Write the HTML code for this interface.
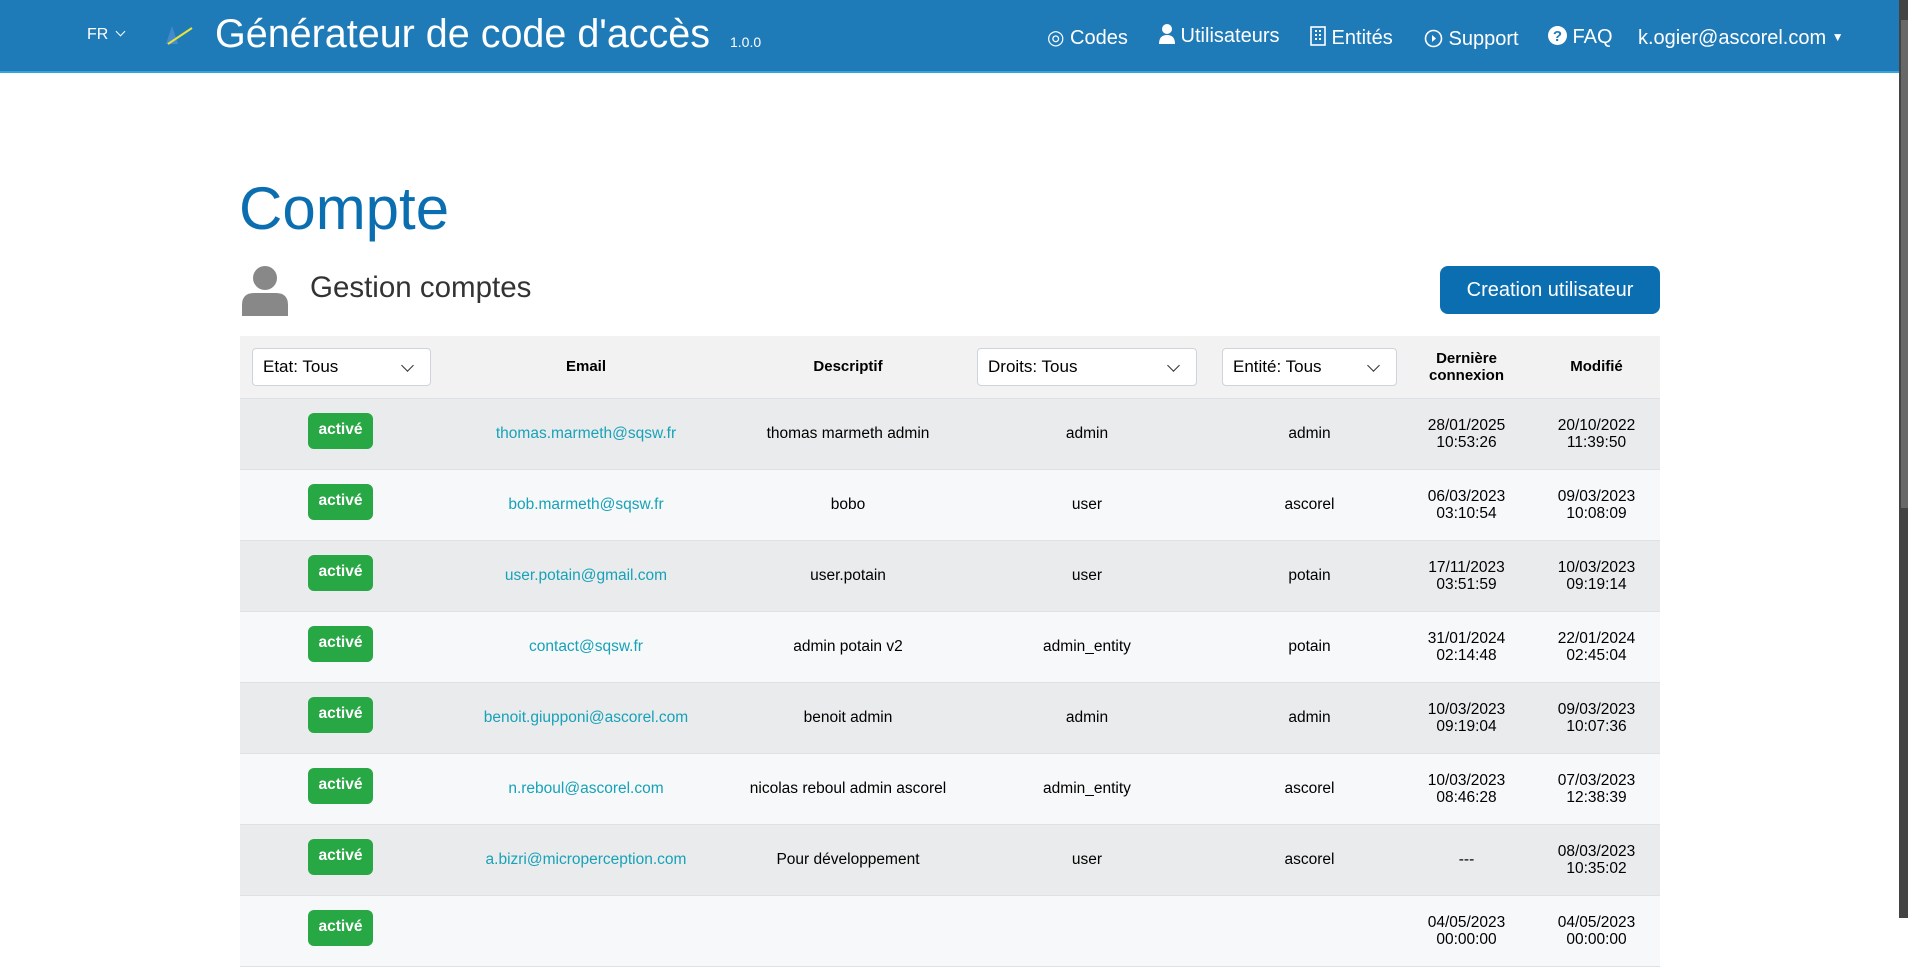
<!DOCTYPE html>
<html><head><meta charset="utf-8"><style>
*{box-sizing:border-box;margin:0;padding:0}
body{width:1908px;height:918px;overflow:hidden;background:#fff;font-family:"Liberation Sans",Arial,sans-serif;position:relative}
.hdr{position:absolute;left:0;top:0;width:1899px;height:73px;background:#1f7bb8;border-bottom:2px solid #35a3dc;color:#fff}
.hdr .t{position:absolute;white-space:nowrap}
.nav{font-size:20px;top:25px}
.scroll{position:absolute;left:1899px;top:0;width:9px;height:918px;background:#434343}
.scroll div{position:absolute;left:2px;top:20px;width:7px;height:488px;background:#686868}
h1{position:absolute;left:239px;top:174px;font-size:60px;font-weight:normal;color:#0a6eb0}
.sub{position:absolute;left:310px;top:271px;font-size:29.5px;color:#333}
.btn{position:absolute;left:1440px;top:266px;width:220px;height:48px;background:#0a6eb0;border-radius:8px;color:#fff;font-size:20px;text-align:center;line-height:48px}
table{position:absolute;left:240px;top:336px;width:1420px;border-collapse:collapse;font-size:16px}
th{height:62px;background:#f2f2f2;font-weight:bold;font-size:15px;text-align:center;border-bottom:1px solid #dee2e6;line-height:17px}
td{height:71px;text-align:center;border-bottom:1px solid #dee2e6;line-height:17px;font-size:15.5px}
tr.o td{background:#eaebec}tr.e td{background:#f7f8f9}
.sel{display:block;margin:0 auto;height:38px;border:1px solid #ced4da;border-radius:4px;background:#fff;text-align:left;font-weight:normal;font-size:17px;padding:0 10px;line-height:36px;position:relative}
.sel:after{content:"";position:absolute;right:18px;top:12px;width:8px;height:8px;border-right:1.6px solid #333;border-bottom:1.6px solid #333;transform:rotate(45deg)}
.b{display:inline-block;background:#28a745;color:#fff;font-weight:bold;font-size:15.5px;padding:0 11px;height:36px;line-height:34px;border-radius:6px;margin-left:10px;position:relative;top:-3px}
.m{color:#17a2b8}
</style></head><body>
<div class="hdr">
<div class="t" style="left:87px;top:26px;font-size:16px">FR <span style="display:inline-block;width:7px;height:7px;border-right:1.5px solid #fff;border-bottom:1.5px solid #fff;transform:rotate(45deg);margin:0 0 4px 4px"></span></div>
<svg style="position:absolute;left:156px;top:20px" width="40" height="30"><polygon points="10,24 16,6 22,24" fill="#4b8fcf" opacity=".8"/><line x1="12" y1="24" x2="36" y2="8" stroke="#e8e23a" stroke-width="2"/></svg>
<div class="t" style="left:215px;top:12px;font-size:39.5px">Générateur de code d'accès</div>
<div class="t" style="left:730px;top:34px;font-size:14px">1.0.0</div>
<div class="t nav" style="left:1047px">◎ Codes</div>
<div class="t nav" style="left:1159px;top:24px"><svg width="16" height="20" style="vertical-align:-2px"><circle cx="8" cy="5" r="5" fill="#fff"/><path d="M0 20 Q0 11 8 11 Q16 11 16 20Z" fill="#fff"/></svg> Utilisateurs</div>
<div class="t nav" style="left:1310px;top:26px"><svg width="16" height="20" style="vertical-align:-2px"><rect x="1" y="1" width="14" height="18" fill="none" stroke="#fff" stroke-width="1.6"/><path d="M5 5h2M9 5h2M5 9h2M9 9h2M5 13h2M9 13h2" stroke="#fff" stroke-width="2"/></svg> Entités</div>
<div class="t nav" style="left:1424px;top:28px"><svg width="19" height="19" style="vertical-align:-3px"><circle cx="9.5" cy="9.5" r="8" fill="none" stroke="#fff" stroke-width="1.6"/><path d="M8 6 L12 9.5 L8 13Z" fill="#fff"/></svg> Support</div>
<div class="t nav" style="left:1548px;top:26px"><svg width="19" height="19" style="vertical-align:-2px"><circle cx="9.5" cy="9.5" r="9.5" fill="#fff"/><text x="9.5" y="15" font-size="15" font-weight="bold" fill="#1f7bb8" text-anchor="middle" font-family="Liberation Sans">?</text></svg> FAQ</div>
<div class="t nav" style="left:1638px;top:27px">k.ogier@ascorel.com <span style="font-size:12px;vertical-align:3px">▼</span></div>
</div>
<div class="scroll"><div></div></div>
<h1>Compte</h1>
<svg style="position:absolute;left:242px;top:265px" width="46" height="51"><circle cx="23" cy="13" r="12" fill="#888"/><path d="M0 51 L0 40 Q0 28 12 28 L34 28 Q46 28 46 40 L46 51Z" fill="#888"/></svg>
<div class="sub">Gestion comptes</div>
<div class="btn">Creation utilisateur</div>
<table>
<tr><th style="width:191px;text-align:left;padding-left:12px"><span class="sel" style="width:179px;margin:0">Etat: Tous</span></th><th style="width:310px">Email</th><th style="width:214px">Descriptif</th><th style="width:264px"><span class="sel" style="width:220px">Droits: Tous</span></th><th style="width:181px"><span class="sel" style="width:175px">Entité: Tous</span></th><th style="width:133px">Dernière<br>connexion</th><th>Modifié</th></tr>
<tr class="o"><td><span class="b">activé</span></td><td class="m">thomas.marmeth@sqsw.fr</td><td>thomas marmeth admin</td><td>admin</td><td>admin</td><td>28/01/2025<br>10:53:26</td><td>20/10/2022<br>11:39:50</td></tr>
<tr class="e"><td><span class="b">activé</span></td><td class="m">bob.marmeth@sqsw.fr</td><td>bobo</td><td>user</td><td>ascorel</td><td>06/03/2023<br>03:10:54</td><td>09/03/2023<br>10:08:09</td></tr>
<tr class="o"><td><span class="b">activé</span></td><td class="m">user.potain@gmail.com</td><td>user.potain</td><td>user</td><td>potain</td><td>17/11/2023<br>03:51:59</td><td>10/03/2023<br>09:19:14</td></tr>
<tr class="e"><td><span class="b">activé</span></td><td class="m">contact@sqsw.fr</td><td>admin potain v2</td><td>admin_entity</td><td>potain</td><td>31/01/2024<br>02:14:48</td><td>22/01/2024<br>02:45:04</td></tr>
<tr class="o"><td><span class="b">activé</span></td><td class="m">benoit.giupponi@ascorel.com</td><td>benoit admin</td><td>admin</td><td>admin</td><td>10/03/2023<br>09:19:04</td><td>09/03/2023<br>10:07:36</td></tr>
<tr class="e"><td><span class="b">activé</span></td><td class="m">n.reboul@ascorel.com</td><td>nicolas reboul admin ascorel</td><td>admin_entity</td><td>ascorel</td><td>10/03/2023<br>08:46:28</td><td>07/03/2023<br>12:38:39</td></tr>
<tr class="o"><td><span class="b">activé</span></td><td class="m">a.bizri@microperception.com</td><td>Pour développement</td><td>user</td><td>ascorel</td><td>---</td><td>08/03/2023<br>10:35:02</td></tr>
<tr class="e"><td><span class="b">activé</span></td><td class="m"></td><td></td><td></td><td></td><td>04/05/2023<br>00:00:00</td><td>04/05/2023<br>00:00:00</td></tr>
</table>
</body></html>
